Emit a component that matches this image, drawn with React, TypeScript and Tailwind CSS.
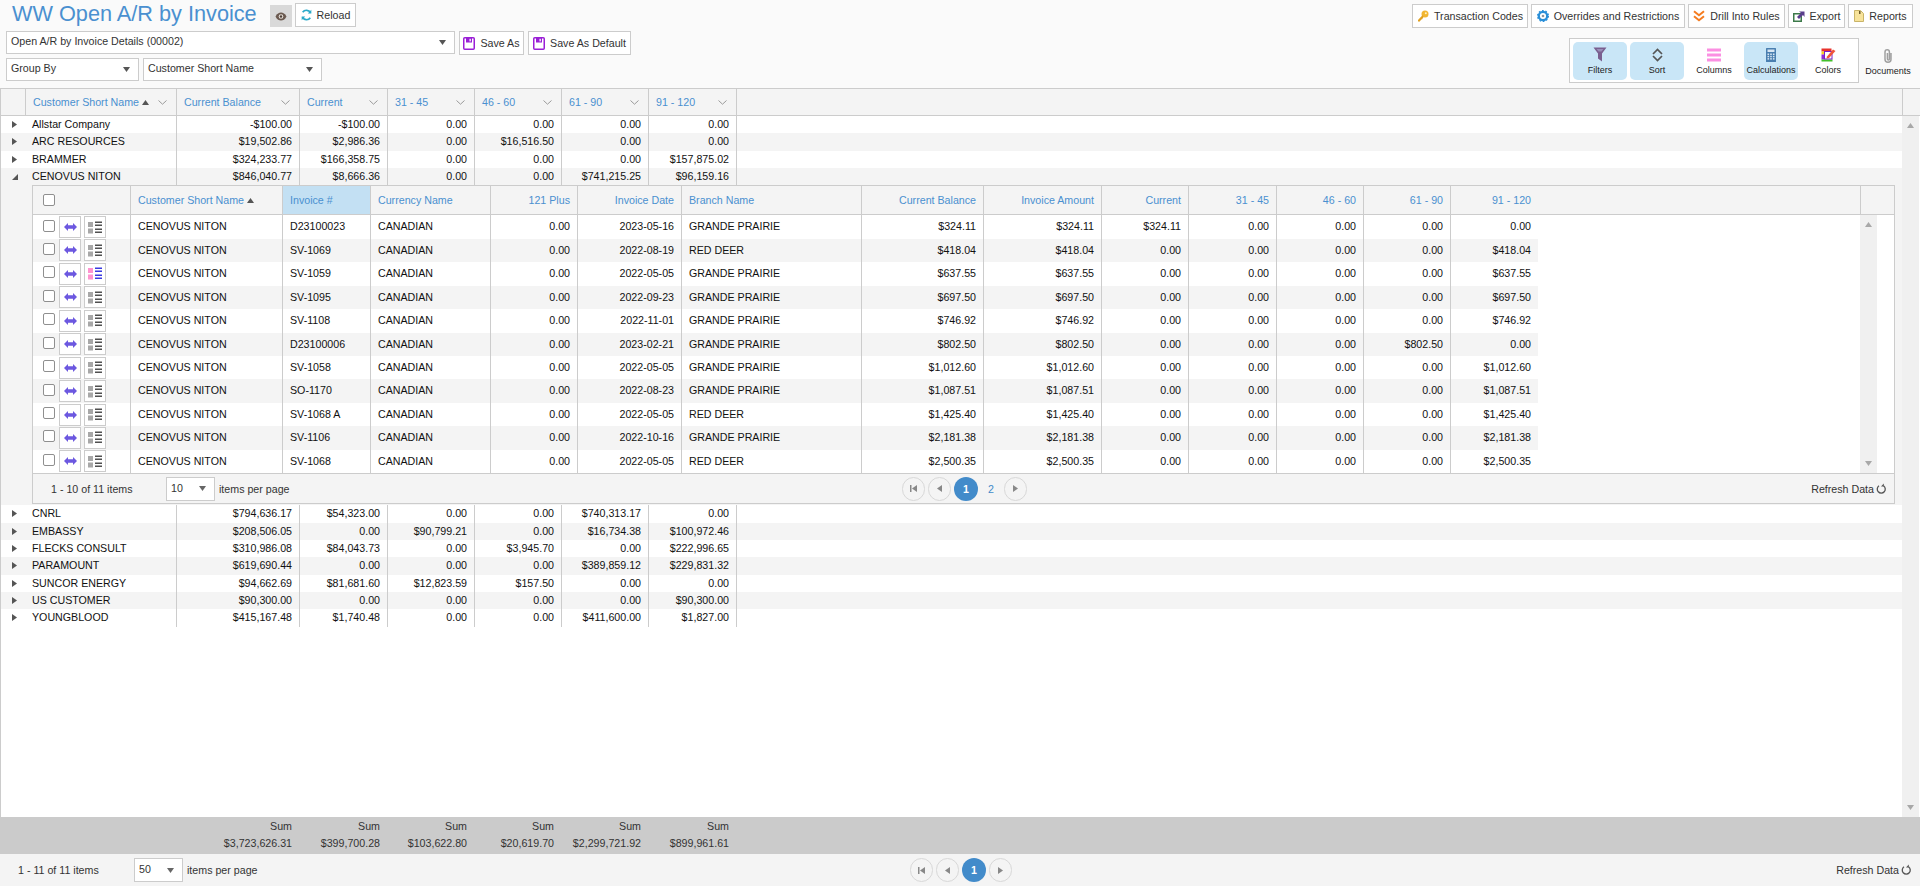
import React from 'react';

const FONT = "font-['Liberation_Sans',Arial,sans-serif]";
const OUTER_COLS = 'grid grid-cols-[25px_151px_123px_88px_87px_87px_87px_88px_1fr]';
const DETAIL_COLS =
  'grid grid-cols-[98px_152px_88px_120px_87px_104px_180px_122px_118px_87px_88px_87px_87px_87px_1fr]';

const Arrow = ({ down = false, className = '' }: { down?: boolean; className?: string }) => (
  <svg width="7" height="5" viewBox="0 0 7 5" className={className}>
    <path d={down ? 'M0 0h7L3.5 5z' : 'M0 5h7L3.5 0z'} fill="currentColor" />
  </svg>
);

const Chevron = () => (
  <svg width="9" height="5" viewBox="0 0 9 5" className="text-[#9a9a9a]">
    <path d="M0.5 0.5L4.5 4.2L8.5 0.5" fill="none" stroke="currentColor" strokeWidth="1" />
  </svg>
);

const Floppy = () => (
  <svg width="12" height="13" viewBox="0 0 12 13">
    <rect x="0.75" y="0.75" width="10.5" height="11.5" rx="1" fill="#fff" stroke="#9a1fd6" strokeWidth="1.5" />
    <rect x="3" y="1" width="6" height="4.5" fill="#9a1fd6" />
    <rect x="6.5" y="1.8" width="1.3" height="2.6" fill="#fff" />
  </svg>
);

const ToolButton = ({ icon, label, className = '' }: { icon: React.ReactNode; label: string; className?: string }) => (
  <div className={`flex h-[24px] items-center justify-center gap-[5px] border border-[#cccccc] bg-white text-[10.67px] text-[#333] ${className}`}>
    {icon}
    <span className="whitespace-nowrap">{label}</span>
  </div>
);

const SelectBox = ({ label, className = '' }: { label: string; className?: string }) => (
  <div className={`flex items-center justify-between border border-[#cccccc] bg-white pl-[4px] pr-[8px] text-[10.67px] text-[#333] ${className}`}>
    <span className="-mt-[3px] whitespace-nowrap">{label}</span>
    <Arrow down className="text-[#555]" />
  </div>
);

const Tile = ({ icon, label, on = false }: { icon: React.ReactNode; label: string; on?: boolean }) => (
  <div className={`flex h-[38px] w-[54px] flex-col items-center rounded-[5px] pt-[5px] ${on ? 'bg-[#c9e6f7]' : ''}`}>
    <div className="flex h-[15px] items-center">{icon}</div>
    <span className="mt-[3px] whitespace-nowrap text-[9px] leading-[10px] text-[#222]">{label}</span>
  </div>
);

const TopBar = () => (
  <div className="flex h-[88px] shrink-0 justify-between bg-[#fafafa]">
    <div className="flex flex-col pl-[6px]">
      <div className="flex h-[27px] items-start pt-[3px]">
        <h1 className="ml-[6px] w-[258px] text-[21.7px] leading-[22px] font-normal whitespace-nowrap text-[#4a90d0]">WW Open A/R by Invoice</h1>
        <div className="mt-[2px] flex h-[22px] w-[22px] items-center justify-center bg-[#d9d9d9]">
          <svg width="12" height="9" viewBox="0 0 12 9">
            <path d="M0.5 4.5C2 1.5 4 0.5 6 0.5s4 1 5.5 4C10 7.5 8 8.500 6 8.500s-4-1-5.500-4z" fill="#6b5a50" />
            <circle cx="6" cy="4.500" r="2.300" fill="#e8e2dc" />
            <circle cx="6" cy="4.500" r="1.200" fill="#4d3f37" />
          </svg>
        </div>
        <ToolButton
          className="ml-[3px] w-[61px]"
          label="Reload"
          icon={
            <svg width="11" height="12" viewBox="0 0 11 12" fill="none">
              <path d="M9.500 3.800A4.500 4.500 0 0 0 1.700 3.300" stroke="#2aa9c9" strokeWidth="1.700" />
              <path d="M10.300 0.800v3.700H6.800z" fill="#2aa9c9" />
              <path d="M1.500 8.200A4.500 4.500 0 0 0 9.300 8.700" stroke="#2aa9c9" strokeWidth="1.700" />
              <path d="M0.700 11.200V7.500h3.500z" fill="#2aa9c9" />
            </svg>
          }
        />
      </div>
      <div className="mt-[4px] flex gap-[4px]">
        <SelectBox label="Open A/R by Invoice Details (00002)" className="h-[23px] w-[449px]" />
        <ToolButton className="h-[23px] w-[65px]" label="Save As" icon={<Floppy />} />
        <ToolButton className="h-[23px] w-[103px]" label="Save As Default" icon={<Floppy />} />
      </div>
      <div className="mt-[3px] flex gap-[4px]">
        <SelectBox label="Group By" className="h-[23px] w-[133px]" />
        <SelectBox label="Customer Short Name" className="h-[23px] w-[179px]" />
      </div>
    </div>
    <div className="flex flex-col items-end pt-[4px] pr-[7px]">
      <div className="flex gap-[3px]">
        <ToolButton
          className="w-[116px]"
          label="Transaction Codes"
          icon={
            <svg width="12" height="12" viewBox="0 0 12 12">
              <circle cx="8" cy="4" r="3.500" fill="#f2b632" />
              <circle cx="8.800" cy="3.200" r="1" fill="#fff3c4" />
              <path d="M5.500 5.200L1 10v1.500h2v-1h1v-1h1l1.500-2.500z" fill="#e0a020" />
            </svg>
          }
        />
        <ToolButton
          className="w-[154px]"
          label="Overrides and Restrictions"
          icon={
            <svg width="12" height="12" viewBox="0 0 12 12">
              <circle cx="6" cy="6" r="4.200" fill="none" stroke="#2a8fd8" strokeWidth="2.300" />
              <circle cx="6" cy="6" r="5.400" fill="none" stroke="#2a8fd8" strokeWidth="1.300" strokeDasharray="1.700 1.700" />
              <circle cx="6" cy="6" r="1.300" fill="#8a96a0" />
            </svg>
          }
        />
        <ToolButton
          className="w-[97px]"
          label="Drill Into Rules"
          icon={
            <svg width="12" height="12" viewBox="0 0 12 12" fill="none" stroke="#f57c20" strokeWidth="2">
              <path d="M1 1.200l5 4 5-4" />
              <path d="M1 6.200l5 4 5-4" />
            </svg>
          }
        />
        <ToolButton
          className="w-[57px]"
          label="Export"
          icon={
            <svg width="12" height="12" viewBox="0 0 12 12">
              <rect x="0.750" y="3.750" width="7.500" height="7.500" fill="#fff" stroke="#3d7a4a" strokeWidth="1.500" />
              <path d="M4 7l4-4-2-1.500h5.500v5.500L10 5l-4 4z" fill="#5a3f8c" />
            </svg>
          }
        />
        <ToolButton
          className="w-[65px]"
          label="Reports"
          icon={
            <svg width="10" height="12" viewBox="0 0 10 12">
              <path d="M0.500 0.500h6l3 3v8h-9z" fill="#f7e39a" stroke="#c9b468" />
              <path d="M5 1h1.500v3H5z" fill="#6b5a2a" />
            </svg>
          }
        />
      </div>
      <div className="mt-[10px] flex items-start">
        <div className="flex h-[45px] w-[290px] gap-[3px] border border-[#cccccc] bg-white pt-[3px] pl-[3px]">
          <Tile
            on
            label="Filters"
            icon={
              <svg width="14" height="15" viewBox="0 0 14 15">
                <path d="M0.500 0.500h13L9 6.500V14.500L5 11.500V6.500z" fill="#7a5f8f" />
                <path d="M3.500 2h7L8.500 4.500h-3z" fill="#9a8fb8" />
              </svg>
            }
          />
          <Tile
            on
            label="Sort"
            icon={
              <svg width="11" height="14" viewBox="0 0 11 14" fill="none" stroke="#555" strokeWidth="1.700">
                <path d="M1 6l4.500-4.500L10 6" />
                <path d="M1 8l4.500 4.500L10 8" />
              </svg>
            }
          />
          <Tile
            label="Columns"
            icon={
              <svg width="14" height="14" viewBox="0 0 14 14" fill="#fb8fe2">
                <rect y="0.500" width="14" height="3" />
                <rect y="5.500" width="14" height="3" />
                <rect y="10.500" width="14" height="3" />
              </svg>
            }
          />
          <Tile
            on
            label="Calculations"
            icon={
              <svg width="10" height="14" viewBox="0 0 10 14">
                <rect width="10" height="14" rx="0.500" fill="#4a7fb0" />
                <rect x="1.500" y="1.500" width="7" height="2.500" fill="#d8e6f2" />
                {[5.500, 7.800, 10.100].map((y) =>
                  [1.500, 4.200, 6.900].map((x) => <rect key={`${x}-${y}`} x={x} y={y} width="1.600" height="1.500" fill="#d8e6f2" />)
                )}
              </svg>
            }
          />
          <Tile
            label="Colors"
            icon={
              <svg width="15" height="14" viewBox="0 0 15 14">
                <rect x="0.500" y="0.500" width="10" height="3" fill="#e8322c" />
                <rect x="0.500" y="3.500" width="3" height="3" fill="#f7d020" />
                <rect x="0.500" y="6.500" width="3" height="5" fill="#8e2bd6" />
                <rect x="0.500" y="11.500" width="11" height="2" fill="#42c02a" />
                <rect x="3.500" y="3.500" width="7.500" height="7.500" fill="#fff" stroke="#7a1fc8" />
                <path d="M6 8.500l6-7 2.500 1.500-6.500 7-2.500 0.500z" fill="#f0553a" />
              </svg>
            }
          />
        </div>
        <div className="ml-[4px] flex w-[50px] flex-col items-center pt-[11px]">
          <svg width="10" height="14" viewBox="0 0 10 14" fill="none" stroke="#a0a0a0" strokeWidth="1.500">
            <path d="M8 4v6.200a3 3 0 0 1-6 0V3a2.200 2.200 0 0 1 4.400 0V10a1 1 0 0 1-2 0V4" />
          </svg>
          <span className="mt-[3px] text-[9px] leading-[10px] text-[#222]">Documents</span>
        </div>
      </div>
    </div>
  </div>
);

const outerHead = ['Current Balance', 'Current', '31 - 45', '46 - 60', '61 - 90', '91 - 120'];

const GridHead = () => (
  <div className={`${OUTER_COLS} h-[28px] shrink-0 border-y border-l border-[#cccccc] bg-[#f4f4f4] text-[10.67px] text-[#4a90d0]`}>
    <div className="border-r border-[#cccccc]" />
    <div className="flex items-center justify-between border-r border-[#cccccc] pr-[9px] pl-[7px]">
      <span className="flex items-center gap-[3px] whitespace-nowrap">
        Customer Short Name <Arrow className="text-[#555]" />
      </span>
      <Chevron />
    </div>
    {outerHead.map((label) => (
      <div key={label} className="flex items-center justify-between border-r border-[#cccccc] pr-[9px] pl-[7px]">
        <span className="whitespace-nowrap">{label}</span>
        <Chevron />
      </div>
    ))}
    <div className="flex justify-end">
      <div className="h-full w-[18px] border-l border-[#cccccc]" />
    </div>
  </div>
);

const outerBefore: string[][] = [
  ['Allstar Company', '-$100.00', '-$100.00', '0.00', '0.00', '0.00', '0.00'],
  ['ARC RESOURCES', '$19,502.86', '$2,986.36', '0.00', '$16,516.50', '0.00', '0.00'],
  ['BRAMMER', '$324,233.77', '$166,358.75', '0.00', '0.00', '0.00', '$157,875.02'],
  ['CENOVUS NITON', '$846,040.77', '$8,666.36', '0.00', '0.00', '$741,215.25', '$96,159.16'],
];

const outerAfter: string[][] = [
  ['CNRL', '$794,636.17', '$54,323.00', '0.00', '0.00', '$740,313.17', '0.00'],
  ['EMBASSY', '$208,506.05', '0.00', '$90,799.21', '0.00', '$16,734.38', '$100,972.46'],
  ['FLECKS CONSULT', '$310,986.08', '$84,043.73', '0.00', '$3,945.70', '0.00', '$222,996.65'],
  ['PARAMOUNT', '$619,690.44', '0.00', '0.00', '0.00', '$389,859.12', '$229,831.32'],
  ['SUNCOR ENERGY', '$94,662.69', '$81,681.60', '$12,823.59', '$157.50', '0.00', '0.00'],
  ['US CUSTOMER', '$90,300.00', '0.00', '0.00', '0.00', '0.00', '$90,300.00'],
  ['YOUNGBLOOD', '$415,167.48', '$1,740.48', '0.00', '0.00', '$411,600.00', '$1,827.00'],
];

const OuterRow = ({ row, striped, open = false }: { row: string[]; striped: boolean; open?: boolean }) => (
  <div className={`${OUTER_COLS} h-[17.33px] text-[10.67px] leading-[17px] text-[#111] ${striped ? 'bg-[#f4f4f4]' : 'bg-white'}`}>
    <div className="flex items-center justify-center pl-[1px] text-[#555]">
      {open ? (
        <svg width="7" height="7" viewBox="0 0 7 7">
          <path d="M7 1v6H1z" fill="currentColor" />
        </svg>
      ) : (
        <svg width="5" height="7" viewBox="0 0 5 7">
          <path d="M0 0l5 3.500L0 7z" fill="currentColor" />
        </svg>
      )}
    </div>
    <div className="border-r border-[#cccccc] pl-[6px] whitespace-nowrap">{row[0]}</div>
    {row.slice(1).map((value, i) => (
      <div key={i} className="border-r border-[#cccccc] pr-[7px] text-right whitespace-nowrap">
        {value}
      </div>
    ))}
    <div />
  </div>
);

const detailRows: string[][] = [
  ['D23100023', '2023-05-16', 'GRANDE PRAIRIE', '$324.11', '$324.11', '$324.11', '0.00', '0.00', '0.00', '0.00'],
  ['SV-1069', '2022-08-19', 'RED DEER', '$418.04', '$418.04', '0.00', '0.00', '0.00', '0.00', '$418.04'],
  ['SV-1059', '2022-05-05', 'GRANDE PRAIRIE', '$637.55', '$637.55', '0.00', '0.00', '0.00', '0.00', '$637.55'],
  ['SV-1095', '2022-09-23', 'GRANDE PRAIRIE', '$697.50', '$697.50', '0.00', '0.00', '0.00', '0.00', '$697.50'],
  ['SV-1108', '2022-11-01', 'GRANDE PRAIRIE', '$746.92', '$746.92', '0.00', '0.00', '0.00', '0.00', '$746.92'],
  ['D23100006', '2023-02-21', 'GRANDE PRAIRIE', '$802.50', '$802.50', '0.00', '0.00', '0.00', '$802.50', '0.00'],
  ['SV-1058', '2022-05-05', 'GRANDE PRAIRIE', '$1,012.60', '$1,012.60', '0.00', '0.00', '0.00', '0.00', '$1,012.60'],
  ['SO-1170', '2022-08-23', 'GRANDE PRAIRIE', '$1,087.51', '$1,087.51', '0.00', '0.00', '0.00', '0.00', '$1,087.51'],
  ['SV-1068 A', '2022-05-05', 'RED DEER', '$1,425.40', '$1,425.40', '0.00', '0.00', '0.00', '0.00', '$1,425.40'],
  ['SV-1106', '2022-10-16', 'GRANDE PRAIRIE', '$2,181.38', '$2,181.38', '0.00', '0.00', '0.00', '0.00', '$2,181.38'],
  ['SV-1068', '2022-05-05', 'RED DEER', '$2,500.35', '$2,500.35', '0.00', '0.00', '0.00', '0.00', '$2,500.35'],
];

const Check = () => <span className="block h-[12px] w-[12px] rounded-[2px] border border-[#8f8f8f] bg-white" />;

const LinkIcon = () => (
  <svg width="13" height="8" viewBox="0 0 13 8" fill="#6c58e0">
    <path d="M0 4l4-4v2.200h5V0l4 4-4 4V5.800H4V8z" />
  </svg>
);

const ListIcon = ({ on = false }: { on?: boolean }) => {
  const left = on ? '#ff94d0' : '#a8a8a8';
  const right = on ? '#3a3ae0' : '#505050';
  return (
    <svg width="14" height="13" viewBox="0 0 14 13">
      <rect y="1" width="5" height="5" fill={left} />
      <rect y="7.500" width="5" height="5" fill={left} />
      <rect x="7" y="0.500" width="7" height="1.500" fill={right} />
      <rect x="7" y="3.500" width="7" height="1.500" fill={right} />
      <rect x="7" y="7.500" width="7" height="1.500" fill={right} />
      <rect x="7" y="10.500" width="7" height="1.500" fill={right} />
    </svg>
  );
};

const IconBox = ({ children }: { children: React.ReactNode }) => (
  <span className="flex h-[22px] w-[22px] items-center justify-center border border-[#cccccc] bg-white">{children}</span>
);

const PageButton = ({ children, className = '' }: { children: React.ReactNode; className?: string }) => (
  <span className={`flex h-[24px] w-[23px] items-center justify-center rounded-full border border-[#d8d8d8] text-[#888] ${className}`}>{children}</span>
);

const FirstIcon = () => (
  <svg width="7" height="7" viewBox="0 0 7 7" fill="currentColor">
    <rect width="1.500" height="7" />
    <path d="M7 0v7L2 3.500z" />
  </svg>
);
const PrevIcon = () => (
  <svg width="5" height="7" viewBox="0 0 5 7" fill="currentColor">
    <path d="M5 0v7L0 3.500z" />
  </svg>
);
const NextIcon = () => (
  <svg width="5" height="7" viewBox="0 0 5 7" fill="currentColor">
    <path d="M0 0v7l5-3.500z" />
  </svg>
);
const RefreshIcon = () => (
  <svg width="11" height="12" viewBox="0 0 11 12" fill="none" stroke="#555" strokeWidth="1.300">
    <path d="M3 2.800a4 4 0 1 0 4.500 0" />
    <path d="M7.800 0.500v3h-2.800" fill="#555" stroke="none" />
  </svg>
);

const Pager = ({
  count,
  perPage,
  pages,
  pagerClass,
  countWidth,
}: {
  count: string;
  perPage: string;
  pages: string[];
  pagerClass: string;
  countWidth: string;
}) => (
  <div className="relative flex h-full items-center text-[10.67px] text-[#333]">
    <span className={`whitespace-nowrap ${countWidth}`}>{count}</span>
    <span className="flex h-[24px] w-[49px] items-center justify-between border border-[#cccccc] bg-white pr-[8px] pl-[4px]">
      <span className="-mt-[2px]">{perPage}</span>
      <Arrow down className="text-[#666]" />
    </span>
    <span className="ml-[4px] whitespace-nowrap">items per page</span>
    <div className={`flex items-center gap-[3px] ${pagerClass}`}>
      <PageButton>
        <FirstIcon />
      </PageButton>
      <PageButton>
        <PrevIcon />
      </PageButton>
      <span className="flex h-[24px] w-[24px] items-center justify-center rounded-full bg-[#428bca] font-bold text-white">1</span>
      {pages.slice(1).map((p) => (
        <span key={p} className="flex h-[24px] w-[20px] items-center justify-center text-[#428bca]">
          {p}
        </span>
      ))}
      <PageButton className="text-[#555]">
        <NextIcon />
      </PageButton>
    </div>
    <div className="ml-auto flex items-center gap-[2px] whitespace-nowrap">
      Refresh Data <RefreshIcon />
    </div>
  </div>
);

const Scrollbar = ({ className = '' }: { className?: string }) => (
  <div className={`flex shrink-0 flex-col items-center justify-between bg-[#f0f0f0] py-[7px] text-[#a8a8a8] ${className}`}>
    <Arrow />
    <Arrow down />
  </div>
);

const stripe = (i: number) => (i % 2 ? 'bg-[#f4f4f4]' : '');

const DetailGrid = () => (
  <div className="flex h-[320px] bg-[#f4f4f4] pr-[7px] pl-[31px]">
    <div className="flex h-[319px] flex-1 flex-col border border-[#cccccc] text-[10.67px] text-[#111]">
      <div className={`${DETAIL_COLS} h-[29px] shrink-0 border-b border-[#cccccc] bg-[#f4f4f4] text-[#4a90d0]`}>
        <div className="flex items-center border-r border-[#cccccc] pl-[10px]">
          <Check />
        </div>
        <div className="flex items-center gap-[3px] border-r border-[#cccccc] pl-[7px] whitespace-nowrap">
          Customer Short Name <Arrow className="text-[#555]" />
        </div>
        <div className="flex items-center border-r border-[#cccccc] bg-[#c3e0f3] pl-[7px]">Invoice #</div>
        <div className="flex items-center border-r border-[#cccccc] pl-[7px] whitespace-nowrap">Currency Name</div>
        <div className="flex items-center justify-end border-r border-[#cccccc] pr-[7px]">121 Plus</div>
        <div className="flex items-center justify-end border-r border-[#cccccc] pr-[7px]">Invoice Date</div>
        <div className="flex items-center border-r border-[#cccccc] pl-[7px]">Branch Name</div>
        <div className="flex items-center justify-end border-r border-[#cccccc] pr-[7px]">Current Balance</div>
        <div className="flex items-center justify-end border-r border-[#cccccc] pr-[7px]">Invoice Amount</div>
        <div className="flex items-center justify-end border-r border-[#cccccc] pr-[7px]">Current</div>
        <div className="flex items-center justify-end border-r border-[#cccccc] pr-[7px]">31 - 45</div>
        <div className="flex items-center justify-end border-r border-[#cccccc] pr-[7px]">46 - 60</div>
        <div className="flex items-center justify-end border-r border-[#cccccc] pr-[7px]">61 - 90</div>
        <div className="flex items-center justify-end pr-[7px]">91 - 120</div>
        <div className="flex justify-end">
          <div className="h-full w-[34px] border-l border-[#cccccc]" />
        </div>
      </div>
      <div className="flex h-[258px] shrink-0 bg-white">
        <div className="flex-1">
          {detailRows.map((row, i) => (
            <div key={row[0]} className={`${DETAIL_COLS} h-[23.45px] leading-[23px]`}>
              <div className={`flex items-center gap-[3px] border-r border-[#cccccc] pl-[10px] ${stripe(i)}`}>
                <span className="mr-[1px] -mt-[3px]">
                  <Check />
                </span>
                <IconBox>
                  <LinkIcon />
                </IconBox>
                <IconBox>
                  <ListIcon on={i === 2} />
                </IconBox>
              </div>
              <div className={`border-r border-[#cccccc] pl-[7px] ${stripe(i)}`}>CENOVUS NITON</div>
              <div className={`border-r border-[#cccccc] pl-[7px] ${stripe(i)}`}>{row[0]}</div>
              <div className={`border-r border-[#cccccc] pl-[7px] ${stripe(i)}`}>CANADIAN</div>
              <div className={`border-r border-[#cccccc] pr-[7px] text-right ${stripe(i)}`}>0.00</div>
              <div className={`border-r border-[#cccccc] pr-[7px] text-right ${stripe(i)}`}>{row[1]}</div>
              <div className={`border-r border-[#cccccc] pl-[7px] ${stripe(i)}`}>{row[2]}</div>
              {row.slice(3, 9).map((value, j) => (
                <div key={j} className={`border-r border-[#cccccc] pr-[7px] text-right ${stripe(i)}`}>
                  {value}
                </div>
              ))}
              <div className={`pr-[7px] text-right ${stripe(i)}`}>{row[9]}</div>
              <div />
            </div>
          ))}
        </div>
        <Scrollbar className="mr-[17px] w-[17px]" />
      </div>
      <div className="flex-1 border-t border-[#cccccc] bg-[#f4f4f4] pr-[7px] pl-[18px]">
        <Pager
          count="1 - 10 of 11 items"
          perPage="10"
          pages={['1', '2']}
          countWidth="w-[115px]"
          pagerClass="absolute left-[851px]"
        />
      </div>
    </div>
  </div>
);

const sums = ['$3,723,626.31', '$399,700.28', '$103,622.80', '$20,619.70', '$2,299,721.92', '$899,961.61'];

const SumBar = () => (
  <div className={`${OUTER_COLS} h-[37px] shrink-0 bg-[#cbcbcb] pl-[1px] text-[10.67px] leading-[17px] text-[#333]`}>
    <div />
    <div />
    {sums.map((value) => (
      <div key={value} className="pt-[1px] pr-[8px] text-right">
        <div>Sum</div>
        <div>{value}</div>
      </div>
    ))}
    <div />
  </div>
);

export default function App() {
  return (
    <div className={`flex h-[886px] w-[1920px] flex-col overflow-hidden bg-white ${FONT}`}>
      <TopBar />
      <GridHead />
      <div className="flex min-h-0 flex-1 border-l border-[#cccccc]">
        <div className="flex-1">
          {outerBefore.map((row, i) => (
            <OuterRow key={row[0]} row={row} striped={i % 2 === 1} open={i === 3} />
          ))}
          <DetailGrid />
          {outerAfter.map((row, i) => (
            <OuterRow key={row[0]} row={row} striped={i % 2 === 1} />
          ))}
        </div>
        <Scrollbar className="mr-px w-[17px]" />
      </div>
      <SumBar />
      <div className="h-[32px] shrink-0 bg-[#f4f4f4] pr-[8px] pl-[18px]">
        <Pager count="1 - 11 of 11 items" perPage="50" pages={['1']} countWidth="w-[116px]" pagerClass="absolute left-[892px]" />
      </div>
    </div>
  );
}
